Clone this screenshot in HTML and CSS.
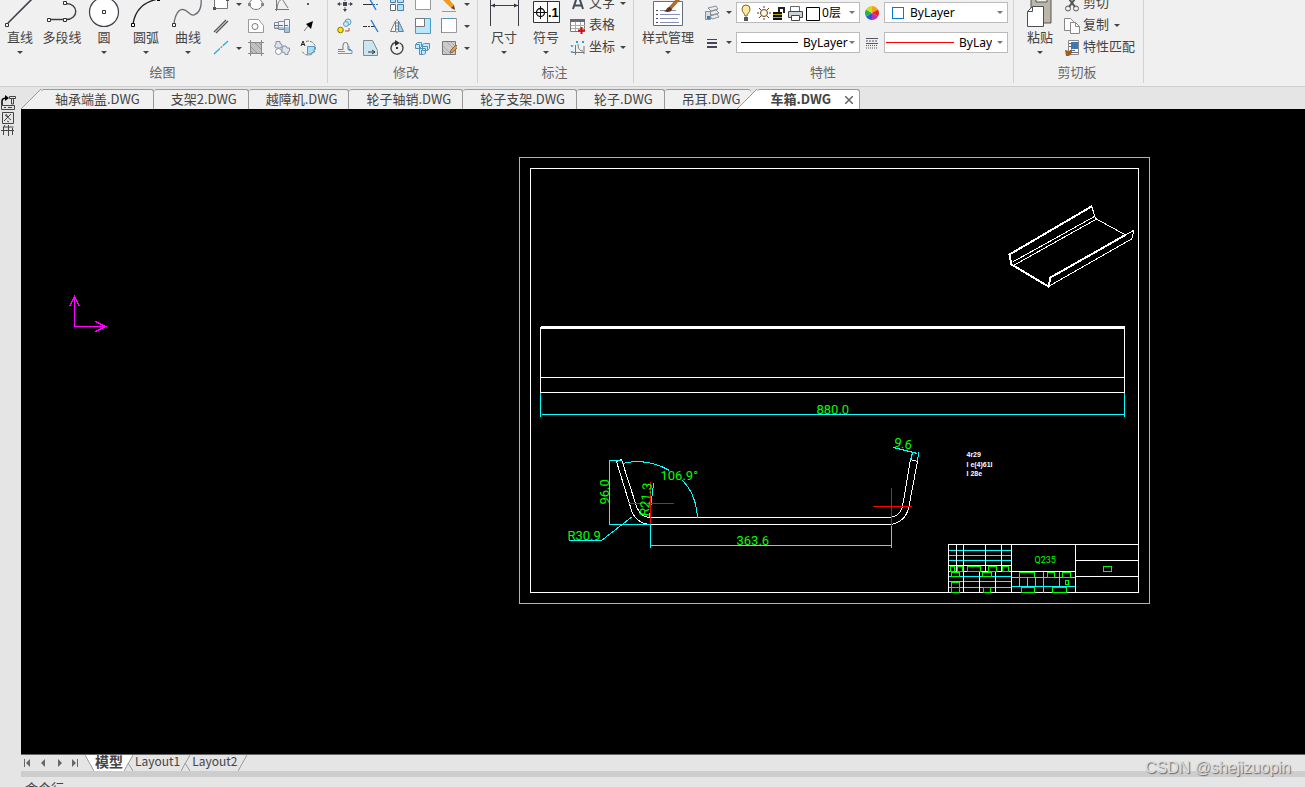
FILE: index.html
```
<!DOCTYPE html>
<html lang="zh-CN">
<head>
    <meta charset="UTF-8">
    <meta name="viewport" content="width=device-width, initial-scale=1.0">
    <title>车箱.DWG</title>
    <link rel="stylesheet" href="styles.css">
</head>
<body>
    <div class="ribbon">
        <section class="group draw">
            <div class="tools">
                <button class="big-btn">
                    <svg width="42" height="28" viewBox="0 0 42 28" fill="none"><path d="M9 23L34-2" stroke="#3c3f48" stroke-width="1.6"/><path d="M6.500 23.500h3v3h-3z" fill="#fff" stroke="#333"/></svg>
                    <span>直线</span><i class="caret"></i>
                </button>
                <button class="big-btn">
                    <svg width="42" height="28" viewBox="0 0 42 28" fill="none"><path d="M8 19.500H25C38 19.500 38 3.500 25 3.500" stroke="#3c3f48" stroke-width="1.4"/><path d="M6.500 18.500h3v3h-3zM22.500 18.500h3v3h-3zM22.500 1.500h3v3h-3z" fill="#fff" stroke="#333"/></svg>
                    <span>多段线</span>
                </button>
                <button class="big-btn">
                    <svg width="42" height="28" viewBox="0 0 42 28" fill="none"><circle cx="21" cy="12" r="14.500" fill="#fff" stroke="#3c3f48" stroke-width="1.200"/><path d="M19.500 10.500h3v3h-3z" fill="#fff" stroke="#333"/></svg>
                    <span>圆</span><i class="caret"></i>
                </button>
                <button class="big-btn">
                    <svg width="42" height="28" viewBox="0 0 42 28" fill="none"><path d="M8 24C10 11 18 2 33-1" stroke="#222" stroke-width="1.300"/><path d="M6.500 23.500h3v3h-3z" fill="#fff" stroke="#000"/><path d="M32-2h3v3h-3z" fill="#000"/></svg>
                    <span>圆弧</span><i class="caret"></i>
                </button>
                <button class="big-btn">
                    <svg width="42" height="28" viewBox="0 0 42 28" fill="none"><path d="M7 24C8 14 12 9 16 9.500C21 10 23 16 27 15C32 13 35 7 34-2" stroke="#6a6c74" stroke-width="1.300"/><path d="M5.500 23.500h3v3h-3z" fill="#fff" stroke="#333"/></svg>
                    <span>曲线</span><i class="caret"></i>
                </button>
                <div class="icon-grid cols-draw">
                    <button class="icon-btn" aria-label="矩形"><svg viewBox="0 0 16 16"><path d="M1.500.500h13v12h-13z" fill="#fff" stroke="#777"/><path d="M0 11h3v3H0zM13 3h3v2h-3z" fill="#555"/></svg><i class="caret"></i></button>
                    <button class="icon-btn" aria-label="椭圆"><svg viewBox="0 0 16 16"><ellipse cx="8" cy="8" rx="6.500" ry="5.500" fill="#fff" stroke="#777"/><path d="M0 7h3v3H0zM13 7h3v3h-3z" fill="#888"/></svg></button>
                    <button class="icon-btn" aria-label="函数曲线"><svg viewBox="0 0 16 16" fill="none" stroke="#777"><path d="M2.500 1v14M1 13.500h14M3 13C4 2 9 2 10 6l4 6"/></svg></button>
                    <button class="icon-btn" aria-label="点"><svg viewBox="0 0 16 16"><path d="M7 7h2v2H7z" fill="#557"/></svg></button>
                    <button class="icon-btn" aria-label="平行线"><svg viewBox="0 0 16 16" stroke="#555" stroke-width="1.300"><path d="M1 14L13 2M3 15L15 3"/></svg></button>
                    <button class="icon-btn" aria-label="轮廓线"><svg viewBox="0 0 16 16" fill="#fff" stroke="#999"><path d="M.500 1.500h10l5 6v7H.500z"/><circle cx="7" cy="8.500" r="3" stroke="#777"/></svg></button>
                    <button class="icon-btn" aria-label="轴"><svg viewBox="0 0 16 16" stroke="#889"><path d="M.500 4.500h4v6h-4zM4.500 3.500h6v8h-6zM10.500 1.500h5v13h-5z" fill="#eef5fb"/><path d="M1 9h3v1H1zM5 9h5v2H5zM11 9h4v5h-4z" fill="#9cc8e8" stroke="none"/><path d="M0 7.500h16" stroke="#47a" stroke-dasharray="4 1"/></svg></button>
                    <button class="icon-btn" aria-label="箭头"><svg viewBox="0 0 16 16"><path d="M4 13l5-6" stroke="#777"/><path d="M13 3L6 6l5 5z" fill="#000"/></svg></button>
                    <button class="icon-btn" aria-label="中心线"><svg viewBox="0 0 16 16"><path d="M1 14L15 1" stroke="#2aa9e0" stroke-width="1.300" stroke-dasharray="8 1 2 1"/></svg><i class="caret"></i></button>
                    <button class="icon-btn" aria-label="剖面线"><svg viewBox="0 0 16 16"><path d="M2 2h12v12H2z" fill="#bcc0c4"/><path d="M2 6l8 8M2 10l4 4M6 2l8 8M10 2l4 4" stroke="#999"/><path d="M2.500 0v16M13.500 0v16M0 2.500h16M0 13.500h16" stroke="#888"/></svg></button>
                    <button class="icon-btn" aria-label="齿轮"><svg viewBox="0 0 16 16" fill="#dce3f0" stroke="#8a8f9c"><path d="M2 1.500h4v2l2 1V7l-2 1H2L.500 6 2 4zM9 6h3l1 2h2.500v3L14 12v2.500h-3V13L8 12V8z"/><circle cx="4.500" cy="11.500" r="3" fill="#fff"/></svg></button>
                    <button class="icon-btn" aria-label="局部放大"><svg viewBox="0 0 16 16" fill="none"><path d="M6 1.500A7 7 0 1 1 2 11" stroke="#777" stroke-dasharray="3 1"/><path d="M7.500 6.500h7V9a6 6 0 0 1-7 5z" fill="#a9dcf7" stroke="#5599bb"/><path d="M1 6l2-5 2 5M2 4.500h2" stroke="#222"/></svg></button>
                </div>
            </div>
            <h2>绘图</h2>
        </section>

        <section class="group modify">
            <div class="tools">
                <div class="icon-grid cols-modify">
                    <button class="icon-btn" aria-label="移动"><svg viewBox="0 0 16 16"><path d="M8 1v14M1 8h14" stroke="#667" stroke-dasharray="4 2 2 2 4"/><path d="M6 3l2-3 2 3zM6 13l2 3 2-3zM3 6L0 8l3 2zM13 6l3 2-3 2zM6 6h4v4H6z" fill="#445"/></svg></button>
                    <button class="icon-btn" aria-label="修剪"><svg viewBox="0 0 16 16" fill="none"><path d="M0 8.500h9" stroke="#333"/><path d="M10 8.500h6" stroke="#2a7ad0" stroke-dasharray="2 1"/><path d="M5 0l8 14" stroke="#2a7ad0" stroke-width="1.400"/></svg></button>
                    <button class="icon-btn" aria-label="阵列"><svg viewBox="0 0 16 16" stroke="#4a80a8"><path d="M1.500 1.500h5v5h-5zM8.500 1.500h6v5h-6zM8.500 8.500h6v6h-6z" fill="#b5e2f8"/><path d="M1.500 8.500h5v6h-5z" fill="#fff" stroke="#667"/></svg></button>
                    <button class="icon-btn" aria-label="矩形框"><svg viewBox="0 0 16 16"><path d="M.500.500h15v13H.500z" fill="#fff" stroke="#999"/></svg></button>
                    <button class="icon-btn" aria-label="删除"><svg viewBox="0 0 16 16"><path d="M1 3l4-3 8 9-3 3z" fill="#f29a1f"/><path d="M10 12l4 2-1-5z" fill="#543"/><path d="M1 15.500h14" stroke="#999"/></svg><i class="caret"></i></button>
                    <button class="icon-btn" aria-label="复制图形"><svg viewBox="0 0 16 16" fill="none"><circle cx="3.500" cy="12" r="2.800" fill="#ffe600" stroke="#887700"/><circle cx="11" cy="4" r="3" fill="#c8ebfb" stroke="#5a9cc8"/><circle cx="9" cy="6" r="2.500" fill="#c8ebfb" stroke="#5a9cc8"/><path d="M8 13h4V10" stroke="#b44"/></svg></button>
                    <button class="icon-btn" aria-label="延伸"><svg viewBox="0 0 16 16" fill="none"><path d="M0 8.500h4M5 8.500h2M8 8.500h4" stroke="#333"/><path d="M8 2l7 12" stroke="#2a7ad0" stroke-width="1.400"/></svg></button>
                    <button class="icon-btn" aria-label="镜像"><svg viewBox="0 0 16 16"><path d="M6.500 3v10.500h-5z" fill="#fff" stroke="#777"/><path d="M9.500 3v10.500h5z" fill="#a8cfea" stroke="#5580a0"/><path d="M8 1v14" stroke="#888" stroke-dasharray="2 1"/></svg></button>
                    <button class="icon-btn" aria-label="缩放"><svg viewBox="0 0 16 16"><path d="M.500.500h15v15H.500z" fill="#b9e7fb" stroke="#4a9cc8"/><path d="M.500.500h9v8h-9z" fill="#fff" stroke="#777"/></svg></button>
                    <button class="icon-btn" aria-label="拉伸"><svg viewBox="0 0 16 16"><path d="M.500.500h15v14H.500z" fill="#fff" stroke="#999"/><path d="M.500 15V.500H15" fill="none" stroke="#259bd8" stroke-dasharray="3 1"/></svg><i class="caret"></i></button>
                    <button class="icon-btn" aria-label="偏移"><svg viewBox="0 0 16 16" fill="none"><path d="M1 9.500h5V5a2 2 0 0 1 5 0v4.500h3" stroke="#777"/><path d="M1 13.500h14v-3h-3V6" stroke="#5d9dca"/><path d="M1 11.500h7" stroke="#5d9dca"/></svg></button>
                    <button class="icon-btn" aria-label="倒角"><svg viewBox="0 0 16 16"><path d="M.500.500h9l5 10v5H.500z" fill="#cbe5f1" stroke="#888"/><path d="M5 12h7M9 10l3 2-3 2" fill="none" stroke="#333"/></svg></button>
                    <button class="icon-btn" aria-label="旋转"><svg viewBox="0 0 16 16" fill="none"><path d="M6 2.500A6 6 0 1 0 11 3" stroke="#444" stroke-width="1.400"/><path d="M6 0l5 3-5 3z" fill="#333"/><path d="M7 7h2v2H7z" fill="#333"/></svg></button>
                    <button class="icon-btn" aria-label="三维阵列"><svg viewBox="0 0 16 16" fill="#c5e9fa" stroke="#4b93bf"><path d="M.500 4.500l2-2h4v4l-2 2h-4zM7.500 4.500l2-1h5v5l-2 2h-5zM4.500 8.500h6v5l-2 1h-4z"/><path d="M.500 4.500h4v4M7.500 6.500h5v4M6.500 10v4" fill="none"/></svg></button>
                    <button class="icon-btn" aria-label="编辑填充"><svg viewBox="0 0 16 16"><path d="M1.500 1.500h13v13h-13z" fill="#ccc" stroke="#777"/><path d="M2 6l8 8M2 10l4 4M6 2l8 8M10 2l4 4" stroke="#aaa"/><path d="M9 13l1-3 5-5 2 2-5 5z" fill="#e79b35" stroke="#865"/></svg><i class="caret"></i></button>
                </div>
            </div>
            <h2>修改</h2>
        </section>

        <section class="group annotate">
            <div class="tools">
                <button class="big-btn">
                    <svg width="42" height="28" viewBox="0 0 42 28"><path d="M7.500-2v28M35.500-2v28M8 5.500h27" stroke="#3c3f48"/><path d="M8 5.500l4-2v4zM35 5.500l-4-2v4z" fill="#333"/></svg>
                    <span>尺寸</span><i class="caret"></i>
                </button>
                <button class="big-btn">
                    <svg width="42" height="28" viewBox="0 0 42 28" fill="none"><path d="M8.500 1.500h26v21h-26zM22.500 1v22" fill="#fff" stroke="#333"/><circle cx="15.500" cy="12.500" r="4" stroke="#111" stroke-width="1.300"/><path d="M9 12.500h13M15.500 6v13" stroke="#111"/><text x="23" y="17" class="symbol-text">.1</text></svg>
                    <span>符号</span><i class="caret"></i>
                </button>
                <div class="text-list">
                    <button class="text-btn"><svg viewBox="0 0 16 16"><path d="M3 13L7 1h2l4 12M4 9.500h8" fill="none" stroke="#444b58" stroke-width="2"/></svg>文字<i class="caret"></i></button>
                    <button class="text-btn"><svg viewBox="0 0 16 16"><path d="M.500 1.500h14v12h-14z" fill="#fff" stroke="#777"/><path d="M0 1h15v3H0z" fill="#666c78"/><path d="M1 7.500h14M1 10.500h14M5.500 4v9M10.500 4v9" stroke="#aaa"/><path d="M8 12.500h7M11.500 9v7" stroke="#d01010" stroke-width="2"/></svg>表格</button>
                    <button class="text-btn"><svg viewBox="0 0 16 16" fill="none"><path d="M5.500 5v10M3 12.500h11M8 4c0 5 2 7 5 7M14 6v8" stroke="#777"/><path d="M6 1l2 2M8 1L6 3M12 1l2 2M14 1l-2 2M1 5l1 2 1-2M1 11l1 2 1-2" stroke="#2a9fe0"/></svg>坐标<i class="caret"></i></button>
                </div>
            </div>
            <h2>标注</h2>
        </section>

        <section class="group properties">
            <div class="tools">
                <button class="big-btn wide">
                    <svg width="42" height="28" viewBox="0 0 42 28" fill="none"><path d="M6.500 1.500h29v24h-29z" fill="#fff" stroke="#5d7080"/><path d="M9 10.500h2M9 14.500h2M9 18.500h2M9 22.500h2" stroke="#446"/><path d="M13 10.500h16M13 14.500h20M13 18.500h18M13 22.500h19" stroke="#8990b8"/><path d="M21 8l9-10 3 2-8 9z" fill="#b06a2c"/><path d="M17 11c3 0 2-4 6-4l2 2c0 3-5 4-8 2z" fill="#5a3420"/></svg>
                    <span>样式管理</span><i class="caret"></i>
                </button>
                <div class="prop-grid">
                    <button class="icon-btn" aria-label="图层"><svg viewBox="0 0 16 16" stroke="#8a8f96"><path d="M4 3l8-2 2 3-7 2zM5 7l7-2 3 3-7 2zM6 11l7-2 2 3-7 2z" fill="#e8edf0"/><path d="M1.500 6.500h5v8h-5z" fill="#d4dde4"/><path d="M3 11h3v3H3z" fill="#3a7db8" stroke="none"/></svg><i class="caret"></i></button>
                    <div class="combo">
                        <svg width="81" height="18" viewBox="0 0 81 18" fill="none">
                            <path d="M5 12C5 9 2 9 2 5a4 4 0 0 1 8 0c0 4-3 4-3 7z" fill="#ffe9a0" stroke="#7a6a30"/><path d="M4 13h4v4H4z" fill="#555"/>
                            <circle cx="24" cy="9" r="3.500" fill="#fff6dd" stroke="#5a4022"/><path d="M24 2v2M24 14v2M17 9h2M29 9h2M19 4l2 2M27 12l2 2M29 4l-2 2M21 12l-2 2" stroke="#5a4022"/>
                            <path d="M33 8h9v8h-9z" fill="#111"/><path d="M33 10.500h9M33 13.500h9" stroke="#bba800"/><path d="M39 8V4h5v5" stroke="#222" stroke-width="2"/>
                            <path d="M50.500 8V2.500h9V8" fill="#fff" stroke="#666"/><path d="M48.500 7.500h14v6h-14z" fill="#ccd4da" stroke="#444"/><path d="M51.500 11.500h8v5h-8z" fill="#fff" stroke="#444"/>
                            <path d="M66.500 3.500h13v13h-13z" fill="#fff" stroke="#000"/>
                        </svg>
                        <select aria-label="图层列表"><option>0层</option></select>
                        <i class="caret light"></i>
                    </div>
                    <svg class="prop-icon" width="16" height="16" viewBox="0 0 16 16"><path d="M8 8V1a7 7 0 0 1 6 3.500z" fill="#f7a21b"/><path d="M8 8l6-3.500a7 7 0 0 1 0 7z" fill="#e8262b"/><path d="M8 8l6 3.500A7 7 0 0 1 8 15z" fill="#c12bb8"/><path d="M8 8v7a7 7 0 0 1-6-3.500z" fill="#2a58dd"/><path d="M8 8l-6 3.500a7 7 0 0 1 0-7z" fill="#24b34b"/><path d="M8 8L2 4.500A7 7 0 0 1 8 1z" fill="#cfdc20"/></svg>
                    <div class="combo">
                        <i class="swatch"></i>
                        <select aria-label="颜色"><option>ByLayer</option></select>
                        <i class="caret light"></i>
                    </div>
                    <button class="icon-btn" aria-label="线宽"><svg viewBox="0 0 16 16" shape-rendering="crispEdges"><path d="M3 4h10v1H3zM3 7h10v2H3zM3 11h10v2H3z" fill="#445"/></svg><i class="caret"></i></button>
                    <div class="combo">
                        <i class="line"></i>
                        <select class="end" aria-label="线宽列表"><option>ByLayer</option></select>
                        <i class="caret light"></i>
                    </div>
                    <svg class="prop-icon" width="16" height="16" viewBox="0 0 16 16" stroke="#556"><path d="M2 3.500h12M2 8.500h12"/><path d="M2 6h12" stroke-dasharray="2 1"/><path d="M2 10.500h12M2 13h12" stroke-dasharray="1 1"/></svg>
                    <div class="combo">
                        <i class="line red"></i>
                        <select class="cut" aria-label="线型列表"><option>ByLayer</option></select>
                        <i class="caret light"></i>
                    </div>
                </div>
            </div>
            <h2>特性</h2>
        </section>

        <section class="group clipboard">
            <div class="tools">
                <button class="big-btn">
                    <svg width="42" height="28" viewBox="0 0 42 28"><path d="M12-1h20v24H12z" fill="#bdb5a8" stroke="#555"/><path d="M17-1h11v3H17z" fill="#eee" stroke="#555"/><path d="M8.500 11.500l5-5h11v20h-16z" fill="#fff" stroke="#4a4f58"/><path d="M8.500 11.500h5v-5" fill="none" stroke="#4a4f58"/></svg>
                    <span>粘贴</span><i class="caret"></i>
                </button>
                <div class="text-list">
                    <button class="text-btn"><svg viewBox="0 0 16 16" fill="none" stroke="#555"><path d="M3 0l8 11M13 0L5 11" stroke-width="2"/><circle cx="4" cy="12.500" r="2.500"/><circle cx="12" cy="12.500" r="2.500"/></svg>剪切</button>
                    <button class="text-btn"><svg viewBox="0 0 16 16" fill="#fff" stroke="#888"><path d="M.500.500h6l3 3v9h-9z"/><path d="M6.500 4.500h5l4 4v7h-9z"/><path d="M11.500 4.500v4h4" fill="none"/></svg>复制<i class="caret"></i></button>
                    <button class="text-btn"><svg viewBox="0 0 16 16"><path d="M4.500.500h10v14h-10z" fill="#fff" stroke="#888"/><path d="M7 2h7v7H7z" fill="#3f77b0"/><path d="M6 10.500h5M6 12.500h8M5 3.500h2M5 6.500h2" stroke="#667"/><path d="M1 10l4 1 3-2v4l-3 3H2z" fill="#a55c1c"/></svg>特性匹配</button>
                </div>
            </div>
            <h2>剪切板</h2>
        </section>
    </div>

    <div class="workspace">
        <aside class="side">
            <svg width="16" height="44" viewBox="0 0 16 44" fill="none" stroke="#444">
                <path d="M2 10V6c0-2 1-3 5-3" stroke="#000" stroke-width="1.500"/><path d="M5 0l4 3-4 3z" fill="#000" stroke="none"/><path d="M9.500 1.500h6v2h-6zM11.500 4v5h2V4"/>
                <path d="M1.500 10.500h13v4h-13zM4 12.500h2M8 12.500h4"/>
                <path d="M2.500 17.500h11v11h-11zM5 20l6 5M11 19l-7 7M6 19l2 3M7 26l2 1"/>
                <path d="M3.500 40V32h10M1 35.500h13M8.500 30v11M12.500 33v7M5 30l-2 3"/>
            </svg>
        </aside>
        <main class="main">
            <nav class="file-tabs">
                <svg class="slant" width="20" height="20" viewBox="0 0 20 20"><path d="M0 20L20 0v20z" fill="#f0f0f0"/><path d="M0 20L20 0" stroke="#999"/></svg>
                <button class="file-tab first">轴承端盖.DWG</button>
                <button class="file-tab">支架2.DWG</button>
                <button class="file-tab">越障机.DWG</button>
                <button class="file-tab">轮子轴销.DWG</button>
                <button class="file-tab">轮子支架.DWG</button>
                <button class="file-tab">轮子.DWG</button>
                <button class="file-tab last">吊耳.DWG</button>
                <svg class="slant over" width="20" height="20" viewBox="0 0 20 20"><path d="M0 20L20 0v20z" fill="#fff"/><path d="M0 20L20 0" stroke="#999"/></svg>
                <button class="file-tab active">车箱.DWG<svg width="8" height="8" viewBox="0 0 8 8"><path d="M0 0l8 8M8 0L0 8" stroke="#666" stroke-width="1.500"/></svg></button>
            </nav>

            <svg class="drawing" viewBox="20.500 108.500 1284 645" preserveAspectRatio="xMidYMid slice" fill="none" shape-rendering="crispEdges">
                <!-- ucs axes -->
                <path class="axis" d="M74 296V326H105M69 306L74 296L79 306M95 321L105 326L95 331"/>
                <!-- sheet frame -->
                <path class="cyan" d="M519 157H1149V603H519z"/>
                <path class="white" d="M530 168H1138V592H530z"/>
                <!-- isometric view -->
                <g class="white">
                    <path d="M1095 218L1126 235M1094 216L1013 261M1097 218L1013 265M1091 205L1095 218M1124 235L1133 230M1132 238L1048 286"/>
                    <path d="M1091 206L1009 254L1011 264L1048 286L1050 277L1124 235" stroke-width="2"/>
                    <path d="M1133 230L1132 238"/>
                </g>
                <!-- top view -->
                <path class="white" d="M540 377H1124M540 392H1124M540 326V392M1124 326V392"/>
                <path class="white" d="M540 327H1124" stroke-width="3"/>
                <path class="cyan" d="M540 392V416M1124 392V416M541 414H1123"/>
                <text class="dim" x="816" y="413">880.0</text>
                <!-- section -->
                <path class="white" d="M621 459L636 506Q640 516 648 517H890Q899 516 902 506L910 459L917 461L908 508Q904 522 890 524H648Q637 522 632 513L616 461z"/>
                <path class="cyan" d="M609 460V524M608 460H620M608 524H650M622 463Q646 457 669 470M682 480Q696 494 697 518M653 483L649 517M568 540H601L632 516M650 524V547M891 524V547M650 545H890M893 447L917 453M912 452L910 460M918 452L917 461"/>
                <path class="red" d="M650 481V523M627 503H673M872 506H911M891 487V525"/>
                <text class="dim" x="660" y="479">106.9°</text>
                <text class="dim" transform="translate(608 504) rotate(-90)">96.0</text>
                <text class="dim" transform="translate(648 516) rotate(-84)">R21.3</text>
                <text class="dim" x="567" y="539">R30.9</text>
                <text class="dim" x="736" y="544">363.6</text>
                <text class="dim" transform="translate(893 446) rotate(10)">9.6</text>
                <text class="note" x="966" y="456">4r29</text>
                <text class="note" x="966" y="466">I e(4)61I</text>
                <text class="note" x="966" y="475">I 28e</text>
                <!-- title block -->
                <path class="cyan" d="M948 550H1011M948 555H1011M948 560H1011M948 576H1011M948 581H1011M948 587H1011M1011 577H1075M1011 586H1075M1043 571V592M1059 571V586M1019 577V586M1027 577V586M1035 577V586"/>
                <path class="white" d="M948 592V544H1138M1011 544V592M1075 544V592M1075 560H1138M1075 576H1138M948 565H1011M948 571H1075M956 544V571M963 544V592M985 544V571M1001 544V571M979 571V592M995 571V592"/>
                <path class="green" d="M950 566h4v5h-4zM957 566h5v5h-5zM967 566h13v5h-13zM988 566h8v5h-8zM1002 566h6v5h-6zM951 572h8v4h-8zM982 572h9v4h-9zM951 582h8v5h-8zM951 587h8v5h-8zM983 587h7v5h-7zM1019 572h15v5h-15zM1047 572h7v5h-7zM1062 572h8v5h-8zM1065 580h3v4h-3zM1021 587h13v5h-13zM1052 587h14v5h-14zM1103 566h8v5h-8z"/>
                <text class="dim code" x="1034" y="562">Q235</text>
            </svg>

            <nav class="layout-tabs">
                <div class="steps">
                    <button aria-label="第一页"><svg width="8" height="8" viewBox="0 0 8 8"><path d="M1 0h1v8H1zM7 0v8L3 4z"/></svg></button>
                    <button aria-label="上一页"><svg width="8" height="8" viewBox="0 0 8 8"><path d="M6 0v8L2 4z"/></svg></button>
                    <button aria-label="下一页"><svg width="8" height="8" viewBox="0 0 8 8"><path d="M3 0v8l4-4z"/></svg></button>
                    <button aria-label="最后一页"><svg width="8" height="8" viewBox="0 0 8 8"><path d="M1 0v8l4-4zM6 0h1v8H6z"/></svg></button>
                </div>
                <svg width="9" height="16" viewBox="0 0 9 16"><path d="M0 0h9v16z" fill="#fff"/><path d="M0 0l9 16" stroke="#999"/></svg>
                <button class="layout-tab active">模型</button>
                <svg width="9" height="16" viewBox="0 0 9 16"><path d="M0 0h9L0 16z" fill="#fff"/><path d="M9 0L0 16M4 8l5 8" fill="none" stroke="#999"/></svg>
                <button class="layout-tab">Layout1</button>
                <svg width="9" height="16" viewBox="0 0 9 16"><path d="M9 0L0 16M4 8l5 8" fill="none" stroke="#999"/></svg>
                <button class="layout-tab">Layout2</button>
                <svg width="9" height="16" viewBox="0 0 9 16"><path d="M9 0L0 16" stroke="#999"/></svg>
            </nav>
            <div class="splitter"></div>
            <div class="command">命令行</div>
        </main>
    </div>
    <div class="watermark">CSDN @shejizuopin</div>
</body>
</html>
```
FILE: styles.css
```
* {
    box-sizing: border-box;
}

body {
    display: flex;
    flex-direction: column;
    height: 100vh;
    margin: 0;
    overflow: hidden;
    background-color: #e5e5e5;
    color: #444;
    font-family: "Noto Sans CJK SC", sans-serif;
    font-size: 13px;
}

button {
    padding: 0;
    border: none;
    background: none;
    color: inherit;
    font: inherit;
    white-space: nowrap;
}

svg {
    display: block;
    flex: none;
}

.caret {
    flex: none;
    width: 0;
    height: 0;
    border: 3px solid transparent;
    border-top-color: #444;
    border-bottom: none;
}

.caret.light {
    border-top-color: #777;
}

/* ribbon */
.ribbon {
    display: flex;
    flex: none;
    height: 87px;
    background-color: #f0f0f0;
    border-bottom: 1px solid #cfcfcf;
    overflow: hidden;
}

.group {
    height: 83px;
    border-right: 1px solid #d2d2d2;
}

.group h2 {
    margin: 0;
    font-size: 13px;
    font-weight: normal;
    line-height: 25px;
    text-align: center;
    color: #666;
}

.tools {
    display: flex;
    align-items: flex-end;
    height: 59px;
}

.big-btn {
    display: flex;
    flex-direction: column;
    align-items: center;
    width: 42px;
    height: 59px;
}

.big-btn.wide {
    width: 60px;
}

.big-btn span {
    line-height: 18px;
}

.big-btn .caret {
    margin-top: 5px;
}

.symbol-text {
    font: bold 13px "Liberation Sans", sans-serif;
    fill: #000;
}

.icon-grid {
    display: grid;
    grid-auto-rows: 22px;
}

.cols-draw {
    grid-template-columns: 35px 26px 26px 25px;
    padding-left: 4px;
}

.cols-modify {
    grid-template-columns: repeat(4, 26px) 34px;
}

.icon-btn {
    display: flex;
    align-items: center;
    gap: 7px;
}

.icon-btn svg,
.text-btn svg {
    width: 16px;
    height: 16px;
}

.draw {
    padding-right: 2px;
}

.draw .tools {
    margin-left: -1px;
}

.modify {
    padding: 0 2px 0 9px;
}

.annotate {
    padding: 0 7px 0 5px;
}

.text-list {
    display: grid;
    grid-auto-rows: 22px;
    padding-left: 3px;
}

.text-btn {
    display: flex;
    align-items: flex-start;
    gap: 3px;
    line-height: 18px;
}

.text-btn svg {
    margin-top: 3px;
}

.text-btn .caret {
    margin: 9px 0 0 2px;
}

.properties {
    padding: 0 5px 0 4px;
}

.prop-grid {
    display: grid;
    grid-template-columns: 38px 124px 24px 124px;
    grid-auto-rows: 21px;
    row-gap: 9px;
    align-items: center;
    padding-bottom: 6px;
}

.prop-grid .icon-btn {
    padding-left: 6px;
    gap: 6px;
}

.prop-icon {
    justify-self: center;
}

.combo {
    display: flex;
    align-items: center;
    height: 21px;
    padding: 0 4px 0 3px;
    border: 1px solid #bbb;
    background-color: #fff;
}

.combo select {
    flex: 1;
    min-width: 0;
    padding: 0 0 0 1px;
    border: none;
    background: none;
    color: #000;
    font: 12px "Noto Sans", "Noto Sans CJK SC", sans-serif;
    appearance: none;
}

.combo .end,
.combo .cut {
    flex: none;
    width: 46px;
    margin-right: 1px;
}

.combo .cut {
    width: 34px;
    margin-right: 5px;
    text-overflow: clip;
}

.swatch {
    width: 12px;
    height: 12px;
    margin: 0 5px 0 4px;
    border: 1px solid #0a78d7;
}

.line {
    flex: 1;
    height: 1px;
    margin: 0 4px 0 1px;
    background-color: #000;
}

.line.red {
    margin: 0 4px 0 -2px;
    background-color: #f00;
}

.clipboard {
    padding: 0 8px 0 5px;
}

/* workspace */
.workspace {
    display: flex;
    flex: 1;
    min-height: 0;
}

.side {
    width: 21px;
    padding-top: 8px;
}

.main {
    display: flex;
    flex: 1;
    flex-direction: column;
    min-width: 0;
}

.file-tabs {
    display: flex;
    flex: none;
    height: 22px;
    padding-top: 2px;
}

.file-tab {
    height: 20px;
    padding: 0 11px 2px 17px;
    border: 1px solid #999;
    border-width: 1px 1px 0 0;
    border-radius: 3px 3px 0 0;
    background-color: #f0f0f0;
    line-height: 16px;
}

.file-tab.first {
    padding: 0 13px 2px 14px;
}

.file-tab.last {
    border-right: none;
}

.slant.over {
    margin-left: -14px;
}

.file-tab.active {
    display: flex;
    align-items: center;
    gap: 14px;
    padding: 0 6px 2px 13px;
    background-color: #fff;
    font-weight: bold;
}

.file-tab.active svg {
    margin-top: 2px;
}

.drawing {
    flex: 1;
    width: 100%;
    min-height: 0;
    background-color: #000;
}

.white {
    stroke: #fff;
}

.cyan {
    stroke: #0ff;
}

.red {
    stroke: #f00;
}

.green {
    stroke: #0f0;
}

.axis {
    stroke: #f0f;
}

.dim {
    fill: #0f0;
    font: 13px Roboto, "Liberation Sans", sans-serif;
}

.dim.code {
    font-size: 9px;
}

.note {
    fill: #fff;
    font: bold 7px "Liberation Sans", sans-serif;
}

.layout-tabs {
    display: flex;
    flex: none;
    height: 17px;
    border-top: 1px solid #666;
    font-size: 12px;
}

.steps {
    display: flex;
    align-items: center;
    width: 64px;
    gap: 8px;
    padding-left: 2px;
    fill: #666;
}

.layout-tab {
    padding: 0 1px 4px 2px;
    line-height: 12px;
}

.layout-tab.active {
    padding-left: 1px;
    background-color: #fff;
    font-size: 14px;
    font-weight: bold;
}

.splitter {
    flex: none;
    height: 6px;
    background-color: #cdcdcd;
}

.command {
    flex: none;
    height: 10px;
    padding-left: 4px;
    line-height: 22px;
    overflow: hidden;
}

.watermark {
    position: absolute;
    right: 14px;
    bottom: 9px;
    color: #ddd;
    font: 16px/20px "Liberation Sans", sans-serif;
    text-shadow: 1px 1px 1px #666;
}
```
